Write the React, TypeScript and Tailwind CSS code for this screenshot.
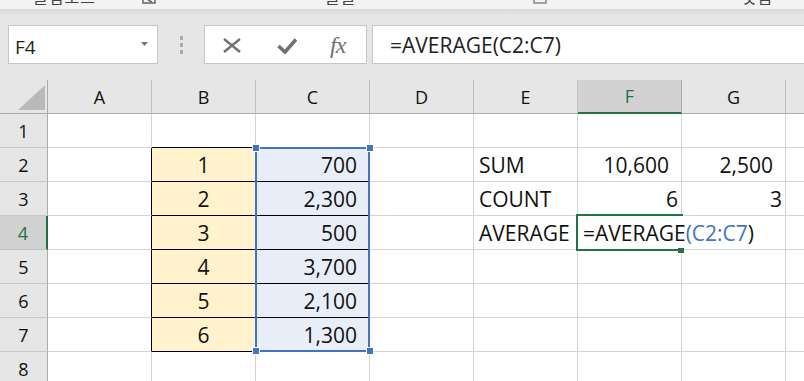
import React from "react";

const COLS = ["A", "B", "C", "D", "E", "F", "G", "H"];
const ROWS = [1, 2, 3, 4, 5, 6, 7, 8];

type Align = "l" | "c" | "r" | "rs";
const data: Record<string, { v: string; a: Align }> = {
  B2: { v: "1", a: "c" },
  B3: { v: "2", a: "c" },
  B4: { v: "3", a: "c" },
  B5: { v: "4", a: "c" },
  B6: { v: "5", a: "c" },
  B7: { v: "6", a: "c" },
  C2: { v: "700", a: "r" },
  C3: { v: "2,300", a: "r" },
  C4: { v: "500", a: "r" },
  C5: { v: "3,700", a: "r" },
  C6: { v: "2,100", a: "r" },
  C7: { v: "1,300", a: "r" },
  E2: { v: "SUM", a: "l" },
  E3: { v: "COUNT", a: "l" },
  E4: { v: "AVERAGE", a: "l" },
  F2: { v: "10,600", a: "r" },
  G2: { v: "2,500", a: "r" },
  F3: { v: "6", a: "rs" },
  G3: { v: "3", a: "rs" },
};

const alignCls: Record<Align, string> = {
  l: "justify-start pl-[5px]",
  c: "justify-center",
  r: "justify-end pr-[12px]",
  rs: "justify-end pr-[3px]",
};

function cellCls(col: string, row: number) {
  let r = "border-r-[#d4d4d4]";
  let b = "border-b-[#d4d4d4]";
  let bg = "bg-white";
  if (col === "A" && row >= 2 && row <= 7) r = "border-r-black";
  if (col === "B" && row === 1) b = "border-b-black";
  if (col === "B" && row >= 2 && row <= 7) {
    r = "border-r-black";
    b = "border-b-black";
    bg = "bg-[#fff2cc]";
  }
  if (col === "C" && row >= 2 && row <= 7) {
    bg = "bg-[#e8eef8]";
    if (row <= 6) b = "border-b-black";
  }
  return `border-r border-b ${r} ${b} ${bg}`;
}

const Handle = ({ cls }: { cls: string }) => (
  <div className={`absolute w-[6px] h-[6px] bg-[#4472c4] outline outline-1 outline-white ${cls}`} />
);

const RibbonStrip = () => (
  <div className="h-[9px] overflow-hidden bg-[#f3f3f3] flex items-start text-[16px] leading-[16px] text-[#444] font-['Noto_Sans_CJK_KR',sans-serif]">
    <span className="ml-[33px] -mt-[12px] w-[107px] tracking-[1px]">클립보드</span>
    <svg width="18" height="9" className="shrink-0">
      <path d="M3 0 V3 H15 V0" stroke="#666" strokeWidth="1.5" fill="none" />
      <path d="M8 0 L12 2" stroke="#666" strokeWidth="1.5" />
    </svg>
    <span className="ml-[167px] -mt-[12px] w-[207px] tracking-[1px]">글꼴</span>
    <svg width="16" height="9" className="shrink-0">
      <path d="M2 0 V3 H14 V0" stroke="#888" strokeWidth="1.5" fill="none" />
    </svg>
    <span className="ml-[194px] -mt-[12px] tracking-[1px]">맞춤</span>
  </div>
);

const FormulaBar = () => (
  <div className="bg-[#e6e6e6]">
    <div className="h-[6px] bg-gradient-to-b from-[#d8d8d8] to-[#e6e6e6]" />
    <div className="flex items-start pt-[10px] h-[65px]">
      <div className="ml-[8px] w-[150px] h-[39px] bg-white border border-[#c6c6c6] flex items-center pl-[6px] pt-[6px] relative">
        <span className="text-[19px] text-[#222]">F4</span>
        <svg width="7" height="4" className="absolute left-[132px] top-[16px]">
          <path d="M0 0 H7 L3.5 4 Z" fill="#777" />
        </svg>
      </div>
      <div className="w-[46px] h-[39px] flex flex-col items-center justify-center gap-[3px] pl-[1px]">
        <div className="w-[3px] h-[4px] bg-[#aaa]" />
        <div className="w-[3px] h-[4px] bg-[#aaa]" />
        <div className="w-[3px] h-[4px] bg-[#aaa]" />
      </div>
      <div className="w-[163px] h-[39px] bg-white border border-[#c6c6c6] flex items-center pl-[18px]">
        <svg width="18" height="15" className="mt-[1px]">
          <path d="M1 1 L17 14 M17 1 L1 14" stroke="#707070" strokeWidth="2.3" />
        </svg>
        <svg width="20" height="16" className="ml-[36px] mt-[2px]">
          <path d="M1.5 8 L8 14 L19 1.5" stroke="#707070" strokeWidth="3.6" fill="none" />
        </svg>
        <span className="ml-[33px] font-['Liberation_Serif',serif] italic text-[24px] text-[#707070] tracking-[-1px]">
          fx
        </span>
      </div>
      <div className="ml-[5px] flex-1 h-[39px] bg-white border border-r-0 border-[#c6c6c6] flex items-center pl-[17px] pt-[2px]">
        <span className="text-[21px] text-[#222]">=AVERAGE(C2:C7)</span>
      </div>
    </div>
  </div>
);

const Sheet = () => (
  <div className="relative">
    <div className="grid grid-cols-[48px_104px_104px_114px_104px_104px_104px_104px_104px] grid-rows-[34px_repeat(8,34px)]">
      <div className="bg-[#e6e6e6] border-r border-b border-r-[#ababab] border-b-[#ababab] relative">
        <svg width="27" height="25" className="absolute left-[18px] top-[5px]">
          <path d="M27 0 V25 H0 Z" fill="#b9b9b9" />
        </svg>
      </div>
      {COLS.map((c) =>
        c === "F" ? (
          <div
            key={c}
            className="bg-[#d2d2d2] border-r border-b-2 border-r-[#ababab] border-b-[#217346] flex items-center justify-center text-[18px] text-[#217346] pt-[1px]"
          >
            {c}
          </div>
        ) : (
          <div
            key={c}
            className="bg-[#e6e6e6] border-r border-b border-r-[#c0c0c0] border-b-[#ababab] flex items-center justify-center text-[18px] text-[#111] pt-[1px]"
          >
            {c}
          </div>
        )
      )}
      {ROWS.map((r) => (
        <React.Fragment key={r}>
          {r === 4 ? (
            <div className="bg-[#d2d2d2] border-r-2 border-b border-r-[#217346] border-b-[#c0c0c0] flex items-center justify-center text-[18px] text-[#217346] pt-[2px]">
              {r}
            </div>
          ) : (
            <div className="bg-[#e6e6e6] border-r border-b border-r-[#ababab] border-b-[#c8c8c8] flex items-center justify-center text-[18px] text-[#111] pt-[2px]">
              {r}
            </div>
          )}
          {COLS.map((c) => {
            const d = data[`${c}${r}`];
            return (
              <div
                key={c}
                className={`${cellCls(c, r)} flex items-center text-[21px] text-[#111] pt-[3px] ${d ? alignCls[d.a] : ""}`}
              >
                {d?.v}
              </div>
            );
          })}
        </React.Fragment>
      ))}
    </div>

    {/* selected range C2:C7 */}
    <div className="absolute left-[255px] top-[67px] w-[115px] h-[205px] border-2 border-[#4472c4]" />
    <Handle cls="left-[253px] top-[65px]" />
    <Handle cls="left-[367px] top-[65px]" />
    <Handle cls="left-[253px] top-[268px]" />
    <Handle cls="left-[367px] top-[268px]" />

    {/* editing cell F4 */}
    <div className="absolute left-[578px] top-[136px] h-[32px] bg-white flex items-center pl-[5px] pt-[3px] text-[21px] text-[#111] whitespace-nowrap">
      =AVERAGE<span className="text-[#4472c4]">(C2:C7</span>)
    </div>
    <div className="absolute left-[576px] top-[134px] w-[107px] h-[37px] border-2 border-r-0 border-[#217346]" />
    <div className="absolute left-[678px] top-[168px] w-[6px] h-[5px] bg-[#217346]" />
  </div>
);

export default function App() {
  return (
    <div className="w-[804px] h-[381px] overflow-hidden bg-white font-['Open_Sans','Noto_Sans_CJK_KR',sans-serif]">
      <RibbonStrip />
      <FormulaBar />
      <Sheet />
    </div>
  );
}
